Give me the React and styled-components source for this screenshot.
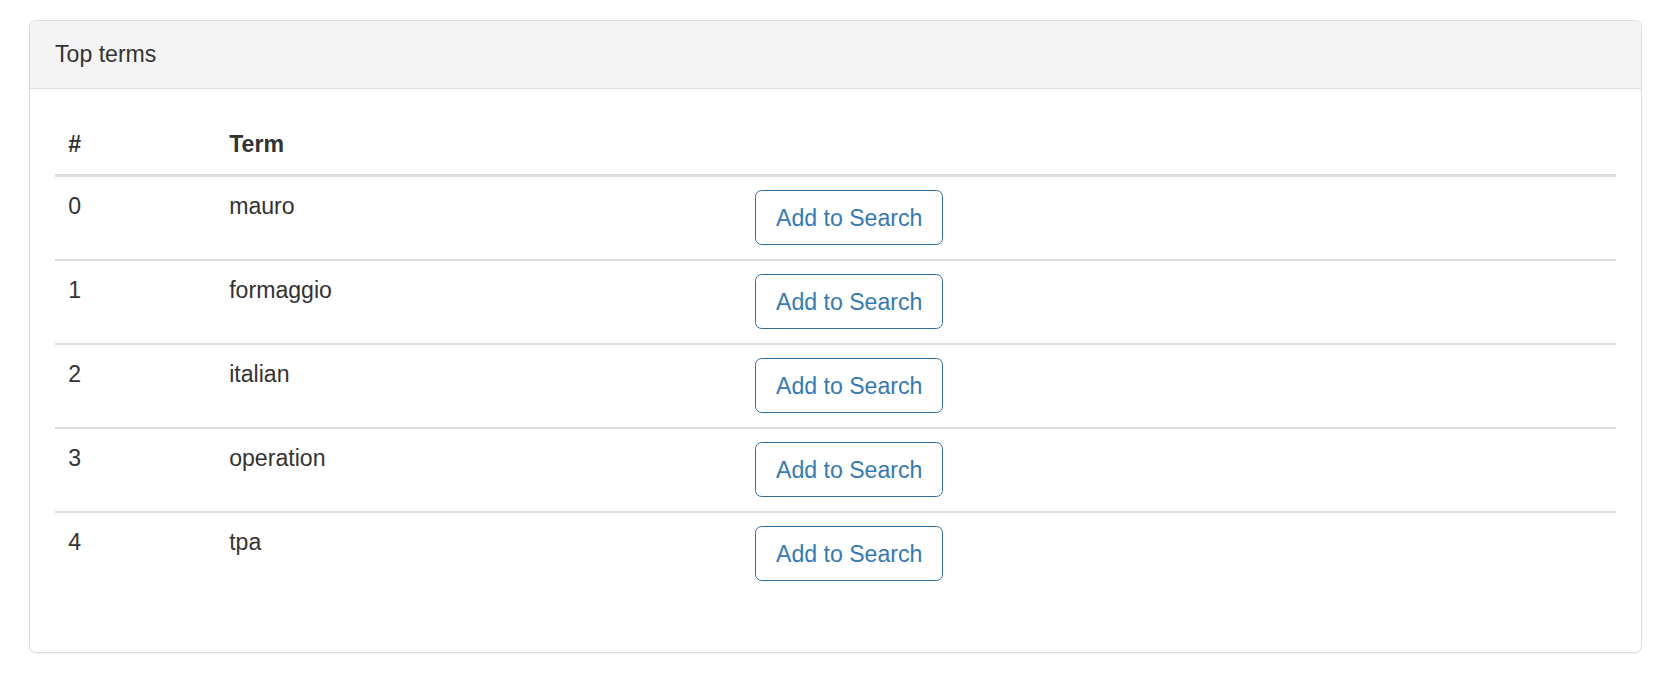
import React from "react";
import styled, { createGlobalStyle } from "styled-components";

const Global = createGlobalStyle`
  html, body { margin: 0; padding: 0; background: #fff; }
  body {
    font-family: "Liberation Sans", Arial, Helvetica, sans-serif;
    font-size: 23.1px;
    line-height: 33px;
    color: #333;
  }
  * { box-sizing: border-box; }
`;

const Page = styled.div`
  padding: 20px 26px 20px 29px;
`;

const Panel = styled.section`
  background: #fff;
  border: 1px solid #ddd;
  border-radius: 6.6px;
  box-shadow: 0 1px 1px rgba(0, 0, 0, 0.05);
  overflow: hidden;
`;

const PanelHeading = styled.header`
  background: #f4f4f4;
  border-bottom: 1px solid #ddd;
  padding: 17.2px 25px 16.8px;
  font-size: 23.1px;
  line-height: 33px;
  color: #333;
`;

const PanelBody = styled.div`
  padding: 26px 25px 24.75px;
`;

const Table = styled.table`
  width: 100%;
  border-collapse: collapse;
  border-spacing: 0;
  table-layout: fixed;
  margin-bottom: 32px;
`;

const HeadCell = styled.th`
  text-align: left;
  font-weight: bold;
  padding: 13.2px 13.2px;
  vertical-align: bottom;
  border-bottom: 3px solid #ddd;
`;

const Row = styled.tr`
  & + & > td {
    border-top: 2px solid #ddd;
  }
`;

const Cell = styled.td`
  padding: 13px 13.2px 14.5px;
  vertical-align: top;
`;

const Button = styled.button`
  display: inline-block;
  font-family: inherit;
  font-size: 23.1px;
  line-height: 32px;
  padding: 9.6px 19.8px;
  height: 54.5px;
  color: #337ab7;
  background: #fff;
  border: 1.6px solid #2e6da4;
  border-radius: 6.6px;
  cursor: pointer;
  white-space: nowrap;
  vertical-align: top;
`;

const terms = ["mauro", "formaggio", "italian", "operation", "tpa"];

export default function App() {
  return (
    <>
      <Global />
      <Page>
        <Panel>
          <PanelHeading>Top terms</PanelHeading>
          <PanelBody>
            <Table>
              <colgroup>
                <col style={{ width: 161 }} />
                <col style={{ width: 526 }} />
                <col />
              </colgroup>
              <thead>
                <tr>
                  <HeadCell>#</HeadCell>
                  <HeadCell>Term</HeadCell>
                  <HeadCell></HeadCell>
                </tr>
              </thead>
              <tbody>
                {terms.map((t, i) => (
                  <Row key={t}>
                    <Cell>{i}</Cell>
                    <Cell>{t}</Cell>
                    <Cell>
                      <Button type="button">Add to Search</Button>
                    </Cell>
                  </Row>
                ))}
              </tbody>
            </Table>
          </PanelBody>
        </Panel>
      </Page>
    </>
  );
}
